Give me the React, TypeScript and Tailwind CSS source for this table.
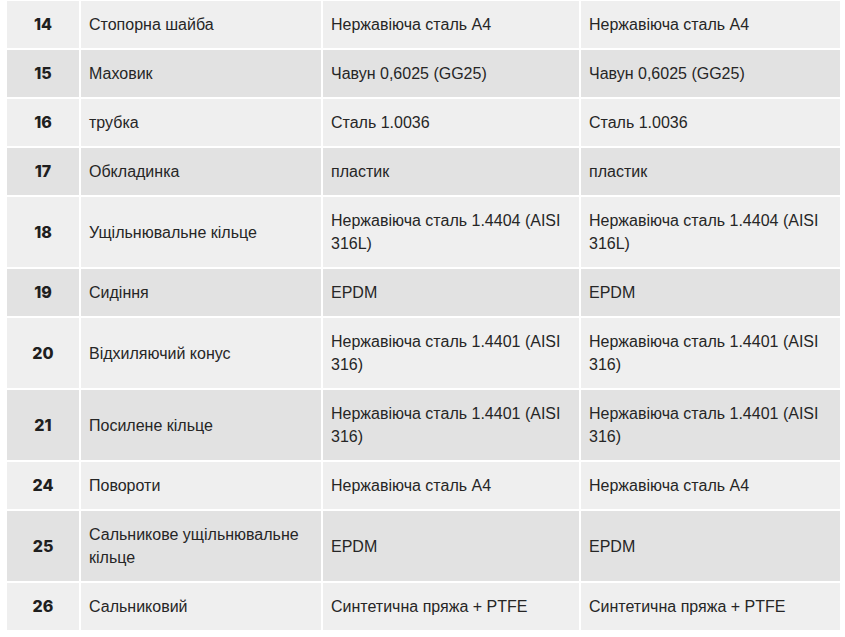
const rows: [string, string, string, string][] = [
  ["14", "Стопорна шайба", "Нержавіюча сталь A4", "Нержавіюча сталь A4"],
  ["15", "Маховик", "Чавун 0,6025 (GG25)", "Чавун 0,6025 (GG25)"],
  ["16", "трубка", "Сталь 1.0036", "Сталь 1.0036"],
  ["17", "Обкладинка", "пластик", "пластик"],
  ["18", "Ущільнювальне кільце", "Нержавіюча сталь 1.4404 (AISI 316L)", "Нержавіюча сталь 1.4404 (AISI 316L)"],
  ["19", "Сидіння", "EPDM", "EPDM"],
  ["20", "Відхиляючий конус", "Нержавіюча сталь 1.4401 (AISI 316)", "Нержавіюча сталь 1.4401 (AISI 316)"],
  ["21", "Посилене кільце", "Нержавіюча сталь 1.4401 (AISI 316)", "Нержавіюча сталь 1.4401 (AISI 316)"],
  ["24", "Повороти", "Нержавіюча сталь A4", "Нержавіюча сталь A4"],
  ["25", "Сальникове ущільнювальне кільце", "EPDM", "EPDM"],
  ["26", "Сальниковий", "Синтетична пряжа + PTFE", "Синтетична пряжа + PTFE"],
];

export default function App() {
  return (
    <div className="min-h-screen w-full bg-white pl-[5px] font-['Liberation_Sans',Arial,sans-serif] text-[#262626]">
      <table className="-mt-[1px] w-[835px] table-fixed border-collapse text-[16px] leading-[23px]">
        <colgroup>
          <col className="w-[74px]" />
          <col className="w-[242px]" />
          <col className="w-[258px]" />
          <col className="w-[261px]" />
        </colgroup>
        <tbody>
          {rows.map((r, i) => (
            <tr key={r[0]} className={i % 2 === 0 ? "bg-[#efefef]" : "bg-[#e2e2e2]"}>
              <td className="border-2 border-white py-3 text-center font-['Inter',sans-serif] text-[16px] font-extrabold text-[#1f1f1f]">
                {r[0]}
              </td>
              <td className="border-2 border-white py-3 pl-2 pr-3">{r[1]}</td>
              <td className="border-2 border-white py-3 pl-2 pr-3">{r[2]}</td>
              <td className="border-2 border-white py-3 pl-2 pr-3">{r[3]}</td>
            </tr>
          ))}
        </tbody>
      </table>
    </div>
  );
}
